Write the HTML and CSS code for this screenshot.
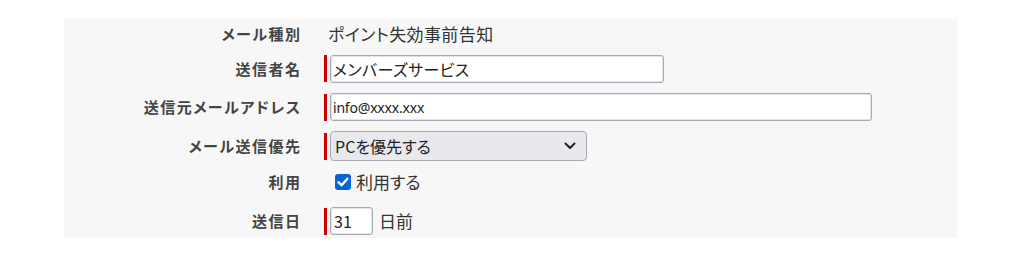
FILE: index.html
```html
<!DOCTYPE html>
<html lang="ja">
<head>
<meta charset="utf-8">
<link rel="stylesheet" href="styles.css">
</head>
<body>
<div class="panel">
  <div class="row r1">
    <div class="label">メール種別</div>
    <div class="value"><span class="plain">ポイント失効事前告知</span></div>
  </div>
  <div class="row r2">
    <div class="label">送信者名</div>
    <div class="value req"><input class="text w-name" type="text" value="メンバーズサービス"></div>
  </div>
  <div class="row r3">
    <div class="label">送信元メールアドレス</div>
    <div class="value req"><input class="text w-mail" type="text" value="info@xxxx.xxx"></div>
  </div>
  <div class="row r4">
    <div class="label">メール送信優先</div>
    <div class="value req">
      <div class="select">
        <span>PCを優先する</span>
        <svg class="chev" width="12" height="8" viewBox="0 0 12 8"><path d="M1.5 1.5 L6 6 L10.5 1.5" fill="none" stroke="#222" stroke-width="2" stroke-linecap="round" stroke-linejoin="round"/></svg>
      </div>
    </div>
  </div>
  <div class="row r5">
    <div class="label">利用</div>
    <div class="value">
      <label class="check">
        <span class="box"><svg width="16" height="16" viewBox="0 0 16 16"><path d="M3.4 8.2 L6.6 11.2 L12.4 4.8" fill="none" stroke="#fff" stroke-width="2.4" stroke-linecap="round" stroke-linejoin="round"/></svg></span>
        <span>利用する</span>
      </label>
    </div>
  </div>
  <div class="row r6">
    <div class="label">送信日</div>
    <div class="value req"><input class="text w-num" type="text" value="31"><span class="unit">日前</span></div>
  </div>
</div>
</body>
</html>
```

FILE: styles.css
```css
html, body {
  margin: 0;
  padding: 0;
  background: #ffffff;
}
body {
  font-family: "Noto Sans CJK JP", "Noto Sans", sans-serif;
  color: #333333;
}
.panel {
  margin: 19px 0 0 64px;
  width: 893px;
  background: #f7f7f7;
}
.row {
  display: grid;
  grid-template-columns: 236px 1fr;
  column-gap: 24px;
  align-items: center;
}
.r1 { height: 30px; }
.r2 { height: 39px; }
.r3 { height: 38px; }
.r4 { height: 40px; }
.r5 { height: 32px; }
.r6 { height: 34px; padding-top: 6px; }

.label {
  text-align: right;
  font-size: 15px;
  font-weight: bold;
  color: #444444;
  letter-spacing: 1.5px;
  font-feature-settings: "palt";
  margin-right: -1.5px;
  line-height: 20px;
}
.value {
  display: flex;
  align-items: center;
  font-size: 16px;
  font-feature-settings: "palt";
  line-height: 20px;
}
.plain {
  padding-left: 4px;
  font-size: 17px;
  letter-spacing: 0.4px;
  color: #333333;
}
.req::before {
  content: "";
  display: block;
  width: 3px;
  height: 27px;
  background: #d00000;
  margin-right: 3px;
  flex: none;
}
.text {
  box-sizing: border-box;
  height: 28px;
  border: 1px solid #a9a9b6;
  border-radius: 3px;
  background: #ffffff;
  font-family: inherit;
  font-size: 16px;
  font-feature-settings: "palt";
  color: #222222;
  padding: 0 2px;
  margin: 0;
  box-shadow: inset 0 0 0 1px #e4e4ea;
}
.w-name { width: 334px; letter-spacing: 0.4px; }
.w-mail { width: 542px; font-family: "Noto Sans", sans-serif; font-size: 14px; letter-spacing: -0.2px; }
.w-num { width: 43px; padding-left: 3px; }
.select {
  box-sizing: border-box;
  width: 257px;
  height: 30px;
  border: 1px solid #a9a9b6;
  border-radius: 4px;
  background: #e9e9ed;
  display: flex;
  align-items: center;
  justify-content: space-between;
  padding: 0 10px 0 4px;
  font-size: 16px;
  color: #222222;
}
.chev { flex: none; }
.check {
  display: flex;
  align-items: center;
  margin-left: 11px;
  font-size: 17px;
  color: #333333;
}
.box {
  width: 16px;
  height: 16px;
  border-radius: 3px;
  background: #0b63d8;
  display: block;
  margin-right: 5px;
}
.box svg { display: block; }
.unit {
  margin-left: 6px;
  font-size: 17px;
  color: #333333;
}
```
